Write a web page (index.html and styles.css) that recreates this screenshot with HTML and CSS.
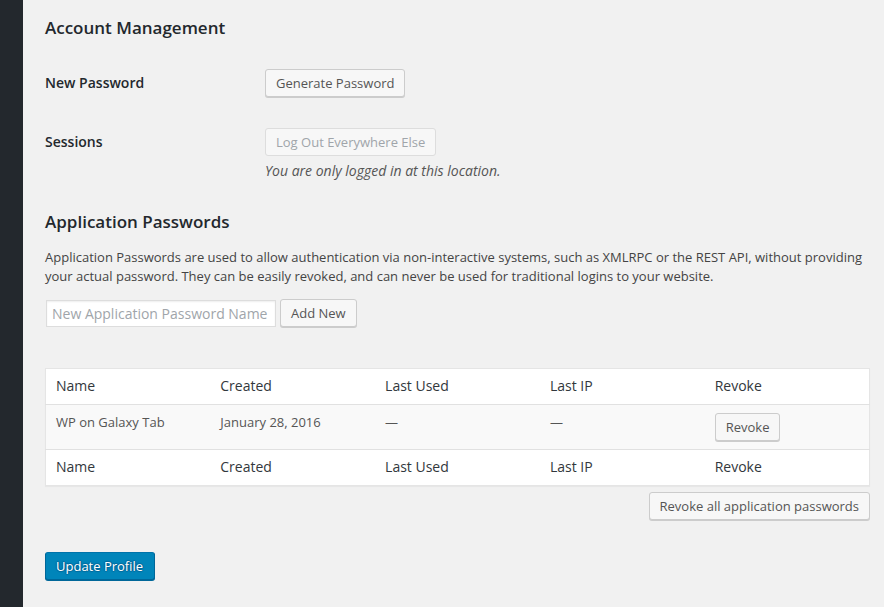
FILE: index.html
```html
<!DOCTYPE html>
<html>
<head>
<meta charset="utf-8">
<link rel="stylesheet" href="styles.css">
</head>
<body>
<div class="layout">
  <aside class="sidebar"></aside>
  <main class="content">
    <h2 class="section-title">Account Management</h2>
    <div class="form-row row-first">
      <div class="label">New Password</div>
      <div class="field">
        <button class="button">Generate Password</button>
      </div>
    </div>
    <div class="form-row row-second">
      <div class="label">Sessions</div>
      <div class="field">
        <button class="button disabled">Log Out Everywhere Else</button>
        <p class="description">You are only logged in at this location.</p>
      </div>
    </div>

    <h2 class="section-title second">Application Passwords</h2>
    <p class="intro">Application Passwords are used to allow authentication via non-interactive systems, such as XMLRPC or the REST API, without providing your actual password. They can be easily revoked, and can never be used for traditional logins to your website.</p>
    <div class="add-row">
      <input class="text-input" type="text" placeholder="New Application Password Name">
      <button class="button">Add New</button>
    </div>

    <table class="list-table">
      <thead>
        <tr><th>Name</th><th>Created</th><th>Last Used</th><th>Last IP</th><th>Revoke</th></tr>
      </thead>
      <tbody>
        <tr>
          <td>WP on Galaxy Tab</td>
          <td>January 28, 2016</td>
          <td>—</td>
          <td>—</td>
          <td class="btn-cell"><button class="button">Revoke</button></td>
        </tr>
      </tbody>
      <tfoot>
        <tr><th>Name</th><th>Created</th><th>Last Used</th><th>Last IP</th><th>Revoke</th></tr>
      </tfoot>
    </table>
    <div class="revoke-all-row">
      <button class="button">Revoke all application passwords</button>
    </div>

    <div class="submit-row">
      <button class="button primary">Update Profile</button>
    </div>
  </main>
</div>
</body>
</html>
```

FILE: styles.css
```css
html, body {
  margin: 0;
  padding: 0;
  height: 100%;
}
body {
  background: #f1f1f1;
  font-family: "Open Sans", "Liberation Sans", sans-serif;
  font-size: 13px;
  color: #444;
  overflow: hidden;
}
.layout {
  display: flex;
  min-height: 100%;
}
.sidebar {
  width: 23px;
  flex: none;
  background: #23282d;
}
.content {
  flex: 1;
  padding: 16px 14px 0 22px;
}
.section-title {
  margin: 0;
  font-size: 17px;
  line-height: 24px;
  font-weight: 600;
  color: #23282d;
}
.section-title.second {
  margin-top: 14px;
}
.form-row {
  display: flex;
}
.row-first {
  margin-top: 14px;
  padding: 15px 0 16px;
}
.row-second {
  padding: 15px 0 15px;
}
.label {
  width: 220px;
  flex: none;
  font-size: 14px;
  font-weight: 600;
  color: #23282d;
  line-height: 28px;
}
.button {
  display: inline-block;
  box-sizing: border-box;
  height: 28px;
  margin: 0;
  padding: 0 10px 1px;
  font-family: inherit;
  font-size: 13px;
  line-height: 26px;
  color: #555;
  background: #f7f7f7;
  border: 1px solid #ccc;
  border-radius: 3px;
  box-shadow: 0 1px 0 #ccc;
  white-space: nowrap;
  vertical-align: top;
}
.button.disabled {
  color: #a0a5aa;
  border-color: #ddd;
  background: #f7f7f7;
  box-shadow: none;
}
.description {
  margin: 5px 0 0;
  font-size: 14px;
  line-height: 20px;
  font-style: italic;
  color: #555;
}
.intro {
  margin: 14px 0 0;
  font-size: 13px;
  line-height: 19px;
  color: #444;
}
.add-row {
  display: flex;
  align-items: center;
  gap: 4px;
  margin-top: 13px;
}
.text-input {
  box-sizing: border-box;
  width: 230px;
  height: 27px;
  margin: 1px 0 0 1px;
  padding: 3px 5px;
  font-family: inherit;
  font-size: 14px;
  color: #32373c;
  background: #fff;
  border: 1px solid #ddd;
  box-shadow: inset 0 1px 2px rgba(0,0,0,.07);
  outline: none;
}
.text-input::placeholder {
  color: #a0a5aa;
}
.list-table {
  margin-top: 41px;
  width: 100%;
  table-layout: fixed;
  border-collapse: collapse;
  background: #fff;
  border: 1px solid #e5e5e5;
  box-shadow: 0 1px 1px rgba(0,0,0,.04);
}
.list-table th {
  text-align: left;
  font-weight: 400;
  font-size: 14px;
  line-height: 20px;
  color: #32373c;
  padding: 7px 10px 8px;
}
.list-table thead th {
  border-bottom: 1px solid #e1e1e1;
}
.list-table tfoot th {
  border-top: 1px solid #e1e1e1;
}
.list-table td {
  font-size: 13px;
  line-height: 20px;
  color: #555;
  padding: 7px 10px 8px;
  vertical-align: top;
  background: #f9f9f9;
}
.list-table td.btn-cell {
  padding-top: 8px;
}
.revoke-all-row {
  display: flex;
  justify-content: flex-end;
  margin-top: 6px;
}
.submit-row {
  margin-top: 32px;
}
.button.primary {
  padding: 0 10.5px 1px 10px;
  color: #fff;
  background: #0085ba;
  border-color: #0073aa #006799 #006799;
  box-shadow: 0 1px 0 #006799;
  text-shadow: 0 -1px 1px #006799, 1px 0 1px #006799, 0 1px 1px #006799, -1px 0 1px #006799;
}
```
